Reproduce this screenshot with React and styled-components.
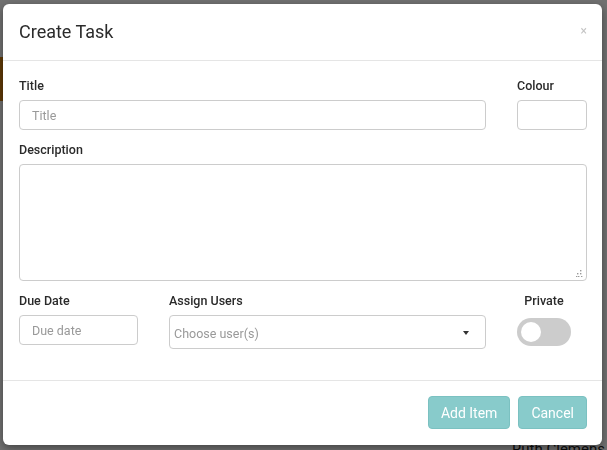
import React, {useState} from 'react';
import styled, {createGlobalStyle} from 'styled-components';

const GlobalStyle = createGlobalStyle`
  html, body {
    margin: 0;
    padding: 0;
    height: 100%;
  }
  body {
    font-family: Roboto, "Liberation Sans", Arial, sans-serif;
    background: #fff;
    overflow: hidden;
  }
  * {
    box-sizing: border-box;
  }
`;

// the board page lying under the dialog
const Page = styled.div`
  height: 100vh;
  display: flex;
  flex-direction: column;
  justify-content: space-between;
  background: #fff;
  >.stripe{
    margin-top: 57px;
    width: 4px;
    height: 44px;
    background: #d9820f;
  }
  >.names{
    align-self: flex-end;
    margin-right: 2px;
    margin-bottom: -8px;
    font-size: 15px;
    color: #222;
  }
`;

const Overlay = styled.div`
  position: fixed;
  inset: 0;
  background: rgba(0, 0, 0, 0.56);
  display: flex;
  align-items: flex-start;
  padding: 4px 5px 0 3px;
`;

const Modal = styled.div`
  width: 599px;
  background: #fff;
  border-radius: 6px;
  box-shadow: 0 3px 9px rgba(0, 0, 0, 0.4);
  color: #333;
`;

const Header = styled.div`
  display: flex;
  align-items: center;
  justify-content: space-between;
  padding: 16px 15px 16px 16px;
  border-bottom: 1px solid #e5e5e5;
  >h4{
    margin: 0;
    font-size: 18px;
    font-weight: 400;
    line-height: 24px;
    color: #2b2b2b;
  }
`;

const Close = styled.button`
  border: 0;
  background: transparent;
  padding: 0;
  margin-top: -2px;
  font-size: 12px;
  line-height: 12px;
  color: #c4c4c4;
  cursor: pointer;
  font-family: inherit;
`;

const Body = styled.div`
  padding: 16px 15px 20px 16px;
  border-bottom: 1px solid #e5e5e5;
`;

const Row = styled.div`
  display: grid;
  grid-template-columns: ${p => p.$cols};
  column-gap: 31px;
`;

const Group = styled.div`
  display: flex;
  flex-direction: column;
  align-items: ${p => (p.$center ? 'center' : 'stretch')};
  margin-bottom: 11px;
  width: ${p => p.$width || 'auto'};
`;

const Label = styled.label`
  font-size: 12.5px;
  font-weight: 500;
  line-height: 18px;
  margin-bottom: 5px;
  color: #2a2a2a;
`;

const Input = styled.input`
  height: 30px;
  width: 100%;
  border: 1px solid #ccc;
  border-radius: 4px;
  padding: 0 12px;
  font-family: inherit;
  font-size: 12.5px;
  color: #555;
  outline: none;
  &::placeholder{
    color: #999;
  }
`;

const AreaWrap = styled.div`
  position: relative;
  height: 117px;
  >textarea{
    height: 100%;
    width: 100%;
    border: 1px solid #ccc;
    border-radius: 4px;
    padding: 6px 12px;
    font-family: inherit;
    font-size: 13px;
    resize: none;
    outline: none;
  }
  >svg{
    position: absolute;
    right: 4px;
    bottom: 4px;
    pointer-events: none;
  }
`;

const Select = styled.div`
  height: 34px;
  border: 1px solid #ccc;
  border-radius: 4px;
  display: flex;
  align-items: center;
  justify-content: space-between;
  padding: 0 16px 0 4px;
  cursor: pointer;
  >span{
    font-size: 12.5px;
    color: #999;
    margin-top: 2px;
  }
  >i{
    width: 0;
    height: 0;
    border-left: 3px solid transparent;
    border-right: 3px solid transparent;
    border-top: 4px solid #333;
    margin-top: 1px;
  }
`;

const Switch = styled.button`
  width: 54px;
  height: 28px;
  margin-top: 3px;
  border: 0;
  border-radius: 14px;
  background: ${p => (p.$on ? '#88cbcb' : '#ccc')};
  padding: 4px;
  display: flex;
  justify-content: ${p => (p.$on ? 'flex-end' : 'flex-start')};
  cursor: pointer;
  >span{
    width: 20px;
    height: 20px;
    border-radius: 50%;
    background: #fff;
  }
`;

const Footer = styled.div`
  display: flex;
  justify-content: flex-end;
  gap: 8px;
  padding: 15px 15px 16px;
`;

const Button = styled.button`
  height: 33px;
  padding: 0 12px;
  border: 1px solid #7bc1c1;
  border-radius: 4px;
  background: #88cbcb;
  color: #fff;
  font-family: inherit;
  font-size: 14px;
  cursor: pointer;
`;

// dotted resize grip in the textarea corner
const Grip = () => (
    <svg width="7" height="7" viewBox="0 0 7 7">
        {[[5, 0], [2, 3], [5, 3], [0, 6], [3, 6], [6, 6]].map(([x, y]) => (
            <rect key={x + '-' + y} x={x === 0 ? 0 : x - 1} y={y} width="1.4" height="1.4" fill="#999"/>
        ))}
    </svg>
);

export default function App() {
    const [priv, setPriv] = useState(false);

    return (
        <>
            <GlobalStyle/>
            <Page>
                <div className="stripe"/>
                <div className="names">Ruth Clemens</div>
            </Page>
            <Overlay>
                <Modal>
                    <Header>
                        <h4>Create Task</h4>
                        <Close aria-label="Close">×</Close>
                    </Header>
                    <Body>
                        <Row $cols="1fr 70px">
                            <Group>
                                <Label>Title</Label>
                                <Input placeholder="Title"/>
                            </Group>
                            <Group>
                                <Label>Colour</Label>
                                <Input/>
                            </Group>
                        </Row>
                        <Group>
                            <Label>Description</Label>
                            <AreaWrap>
                                <textarea/>
                                <Grip/>
                            </AreaWrap>
                        </Group>
                        <Row $cols="119px 1fr 70px">
                            <Group>
                                <Label>Due Date</Label>
                                <Input placeholder="Due date"/>
                            </Group>
                            <Group>
                                <Label>Assign Users</Label>
                                <Select>
                                    <span>Choose user(s)</span>
                                    <i/>
                                </Select>
                            </Group>
                            <Group $center $width="54px">
                                <Label>Private</Label>
                                <Switch $on={priv} onClick={() => setPriv(!priv)}>
                                    <span/>
                                </Switch>
                            </Group>
                        </Row>
                    </Body>
                    <Footer>
                        <Button>Add Item</Button>
                        <Button>Cancel</Button>
                    </Footer>
                </Modal>
            </Overlay>
        </>
    );
}
